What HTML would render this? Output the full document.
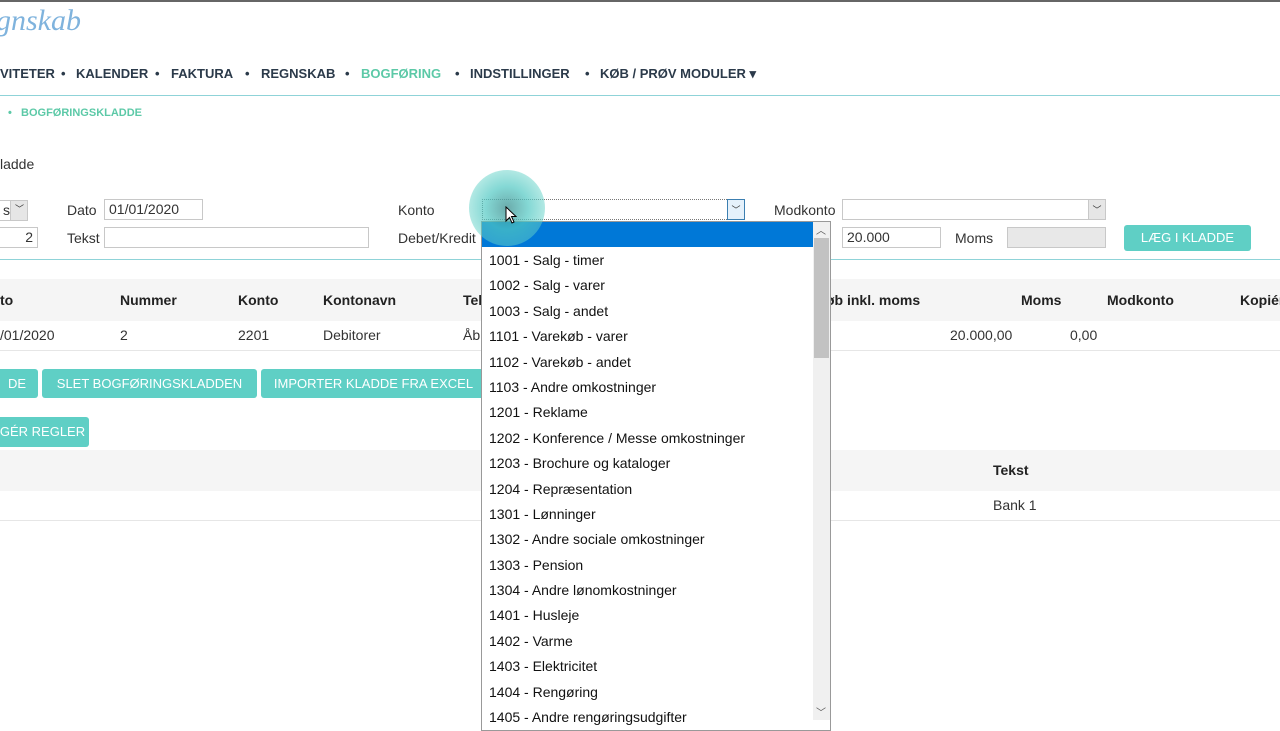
<!DOCTYPE html>
<html><head><meta charset="utf-8"><style>
*{margin:0;padding:0;box-sizing:border-box}
body{width:1280px;height:720px;overflow:hidden;background:#fff;font-family:"Liberation Sans",sans-serif;color:#333;position:relative}
.a{position:absolute;white-space:nowrap}
.nav{font-weight:bold;font-size:13px;color:#2b3a4a;top:66px}
.in{position:absolute;border:1px solid #c8c8c8;background:#fff;height:21px;font-size:14px;padding:1px 4px}
.lab{font-size:14px;color:#333}
.btn{position:absolute;background:#5fcfc5;color:#fff;font-size:13px;border-radius:3px;text-align:center;line-height:29px;height:29px}
.th{font-weight:bold;font-size:14px;color:#222}
.td{font-size:14px;color:#333}
.dd div{height:25.4px;line-height:25.4px;padding-left:7px;font-size:14px;color:#111}
</style></head><body>
<div class="a" style="left:0;top:0;width:1280px;height:2px;background:#666"></div>
<div class="a" style="left:-4px;top:4px;font-size:30px;color:#7fb3dd;font-family:'Liberation Serif',serif;font-style:italic">gnskab</div>
<div class="a nav" style="left:0">VITETER</div>
<div class="a nav" style="left:61px">•</div>
<div class="a nav" style="left:76px">KALENDER</div>
<div class="a nav" style="left:155px">•</div>
<div class="a nav" style="left:171px">FAKTURA</div>
<div class="a nav" style="left:245px">•</div>
<div class="a nav" style="left:261px">REGNSKAB</div>
<div class="a nav" style="left:345px">•</div>
<div class="a nav" style="left:361px;color:#5cc9a7">BOGFØRING</div>
<div class="a nav" style="left:455px">•</div>
<div class="a nav" style="left:470px">INDSTILLINGER</div>
<div class="a nav" style="left:585px">•</div>
<div class="a nav" style="left:600px">KØB / PRØV MODULER ▾</div>
<div class="a" style="left:0;top:95px;width:1280px;height:1px;background:#8fd3d8"></div>
<div class="a" style="left:8px;top:107px;font-size:11px;font-weight:bold;color:#5cc9a7">•&nbsp;&nbsp; BOGFØRINGSKLADDE</div>
<div class="a lab" style="left:0;top:156px">ladde</div>
<div class="in" style="left:-2px;top:200px;width:30px">s</div>
<div class="in" style="left:10px;top:200px;width:18px;background:#e6e6e6;font-size:9px;text-align:center">﹀</div>
<div class="in" style="left:-2px;top:227px;width:40px;text-align:right">2</div>
<div class="a lab" style="left:67px;top:202px">Dato</div>
<div class="in" style="left:104px;top:199px;width:99px">01/01/2020</div>
<div class="a lab" style="left:67px;top:230px">Tekst</div>
<div class="in" style="left:104px;top:227px;width:265px"></div>
<div class="a lab" style="left:398px;top:202px">Konto</div>
<div class="a lab" style="left:398px;top:230px">Debet/Kredit</div>
<div class="in" style="left:482px;top:199px;width:263px;border:1px dotted #777"></div>
<div class="in" style="left:727px;top:199px;width:18px;background:#e5f1fb;border-color:#3c7fb1;font-size:9px;text-align:center;padding:3px 0">﹀</div>
<div class="a lab" style="left:774px;top:202px">Modkonto</div>
<div class="in" style="left:842px;top:199px;width:264px"></div>
<div class="in" style="left:1088px;top:199px;width:18px;background:#e6e6e6;font-size:9px;text-align:center;padding:3px 0">﹀</div>
<div class="in" style="left:842px;top:227px;width:99px">20.000</div>
<div class="a lab" style="left:955px;top:230px">Moms</div>
<div class="in" style="left:1007px;top:227px;width:99px;background:#e8e8e8"></div>
<div class="btn" style="left:1124px;top:225px;width:127px;height:26px;line-height:26px">LÆG I KLADDE</div>
<div class="a" style="left:0;top:259px;width:1280px;height:1px;background:#8fd3d8"></div>
<div class="a" style="left:0;top:279px;width:1280px;height:42px;background:#f5f5f5"></div>
<div class="a th" style="left:0;top:292px">to</div>
<div class="a th" style="left:120px;top:292px">Nummer</div>
<div class="a th" style="left:238px;top:292px">Konto</div>
<div class="a th" style="left:323px;top:292px">Kontonavn</div>
<div class="a th" style="left:463px;top:292px">Tel</div>
<div class="a th" style="left:826px;top:292px">øb inkl. moms</div>
<div class="a th" style="left:1021px;top:292px">Moms</div>
<div class="a th" style="left:1107px;top:292px">Modkonto</div>
<div class="a th" style="left:1240px;top:292px">Kopiér</div>
<div class="a td" style="left:0;top:327px">/01/2020</div>
<div class="a td" style="left:120px;top:327px">2</div>
<div class="a td" style="left:238px;top:327px">2201</div>
<div class="a td" style="left:323px;top:327px">Debitorer</div>
<div class="a td" style="left:463px;top:327px">Åb</div>
<div class="a td" style="left:950px;top:327px">20.000,00</div>
<div class="a td" style="left:1070px;top:327px">0,00</div>
<div class="a" style="left:0;top:350px;width:1280px;height:1px;background:#e6e6e6"></div>
<div class="btn" style="left:-4px;top:369px;width:42px">DE</div>
<div class="btn" style="left:42px;top:369px;width:215px">SLET BOGFØRINGSKLADDEN</div>
<div class="btn" style="left:261px;top:369px;width:225px">IMPORTER KLADDE FRA EXCEL</div>
<div class="btn" style="left:-4px;top:417px;width:93px;height:30px">GÉR REGLER</div>
<div class="a" style="left:0;top:450px;width:1280px;height:41px;background:#f5f5f5"></div>
<div class="a th" style="left:993px;top:462px">Tekst</div>
<div class="a td" style="left:993px;top:497px">Bank 1</div>
<div class="a" style="left:0;top:520px;width:1280px;height:1px;background:#e6e6e6"></div>
<div class="a dd" style="left:481px;top:221px;width:350px;height:510px;background:#fff;border:1px solid #999;overflow:hidden">
<div style="background:#0078d7;height:25px;width:332px"></div>
<div style="margin-top:1px">1001 - Salg - timer</div><div>1002 - Salg - varer</div><div>1003 - Salg - andet</div><div>1101 - Varekøb - varer</div><div>1102 - Varekøb - andet</div><div>1103 - Andre omkostninger</div><div>1201 - Reklame</div><div>1202 - Konference / Messe omkostninger</div><div>1203 - Brochure og kataloger</div><div>1204 - Repræsentation</div><div>1301 - Lønninger</div><div>1302 - Andre sociale omkostninger</div><div>1303 - Pension</div><div>1304 - Andre lønomkostninger</div><div>1401 - Husleje</div><div>1402 - Varme</div><div>1403 - Elektricitet</div><div>1404 - Rengøring</div><div>1405 - Andre rengøringsudgifter</div>
</div>
<div class="a" style="left:813px;top:222px;width:17px;height:498px;background:#f0f0f0"></div>
<div class="a" style="left:814px;top:238px;width:15px;height:120px;background:#c2c2c2"></div>
<div class="a" style="left:816px;top:222px;font-size:10px;color:#555">︿</div>
<div class="a" style="left:816px;top:704px;font-size:10px;color:#555">﹀</div>
<div class="a" style="left:469px;top:170px;width:76px;height:76px;border-radius:50%;background:radial-gradient(circle,rgba(70,150,150,.8) 0,rgba(80,200,195,.7) 40%,rgba(100,210,200,.5) 70%,rgba(100,210,200,.15) 100%)"></div>
<svg class="a" style="left:505px;top:206px" width="12" height="18" viewBox="0 0 12 18"><path d="M1 1V15L4.5 11.5L7 17L9 16L6.5 10.5H11Z" fill="#fff" stroke="#000" stroke-width="1"/></svg>
</body></html>
